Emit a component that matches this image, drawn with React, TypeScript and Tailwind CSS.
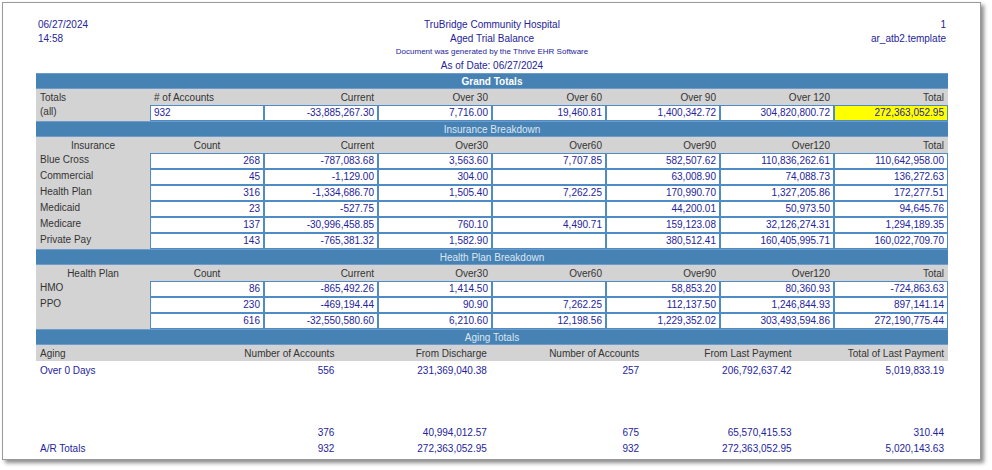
const blue = 'text-[#24249a]';

function Bar({ title, bold }: { title: string; bold?: boolean }) {
  return (
    <div className={`h-[16px] bg-[#4682b4] border-y border-[#6d9ccc] flex items-center justify-center text-[10px] ${bold ? 'font-bold text-white' : 'text-[#dde6f2]'}`}>
      {title}
    </div>
  );
}

function HeadRow({ cells, firstCenter }: { cells: string[]; firstCenter?: boolean }) {
  return (
    <div className="grid grid-cols-8 h-[16px] bg-[#d3d3d3] text-[10px] text-[#333] items-center">
      {cells.map((c, i) => (
        <div key={i} className={`px-1 ${i === 0 ? (firstCenter ? 'text-center' : 'text-left') : i === 1 && !firstCenter ? 'text-left' : i === 1 ? 'text-center' : 'text-right'}`}>
          {c}
        </div>
      ))}
    </div>
  );
}

function DataRow({ label, cells, hl, leftFirst }: { label: string; cells: string[]; hl?: boolean; leftFirst?: boolean }) {
  return (
    <div className="grid grid-cols-8 h-[16px] bg-[#d3d3d3] text-[10px]">
      <div className="px-1 text-[#333] leading-[14px]">{label}</div>
      {cells.map((c, i) => (
        <div
          key={i}
          className={`border border-[#4f8cc6] ${blue} px-[3px] leading-[14px] ${i === 0 && leftFirst ? 'text-left' : 'text-right'} ${hl && i === cells.length - 1 ? 'bg-[#ffff00]' : 'bg-white'}`}
        >
          {c}
        </div>
      ))}
    </div>
  );
}

const ins = [
  ['Blue Cross', '268', '-787,083.68', '3,563.60', '7,707.85', '582,507.62', '110,836,262.61', '110,642,958.00'],
  ['Commercial', '45', '-1,129.00', '304.00', '', '63,008.90', '74,088.73', '136,272.63'],
  ['Health Plan', '316', '-1,334,686.70', '1,505.40', '7,262.25', '170,990.70', '1,327,205.86', '172,277.51'],
  ['Medicaid', '23', '-527.75', '', '', '44,200.01', '50,973.50', '94,645.76'],
  ['Medicare', '137', '-30,996,458.85', '760.10', '4,490.71', '159,123.08', '32,126,274.31', '1,294,189.35'],
  ['Private Pay', '143', '-765,381.32', '1,582.90', '', '380,512.41', '160,405,995.71', '160,022,709.70'],
];

const hp = [
  ['HMO', '86', '-865,492.26', '1,414.50', '', '58,853.20', '80,360.93', '-724,863.63'],
  ['PPO', '230', '-469,194.44', '90.90', '7,262.25', '112,137.50', '1,246,844.93', '897,141.14'],
  ['', '616', '-32,550,580.60', '6,210.60', '12,198.56', '1,229,352.02', '303,493,594.86', '272,190,775.44'],
];

function AgingRow({ cells, cls }: { cells: string[]; cls: string }) {
  return (
    <div className={`grid grid-cols-[150px_repeat(5,1fr)] h-[16px] items-center text-[10px] ${cls}`}>
      {cells.map((c, i) => (
        <div key={i} className={`px-1 ${i === 0 ? 'text-left' : 'text-right'}`}>{c}</div>
      ))}
    </div>
  );
}

export default function App() {
  return (
    <div className="w-[992px] h-[470px] bg-white" style={{ fontFamily: '"Liberation Sans", Arial, sans-serif' }}>
      <div className="ml-[2px] mt-[2px] w-[979px] h-[458px] border border-[#9a9a9a] bg-white shadow-[3px_3px_4px_rgba(0,0,0,0.45)]">
        <div className="ml-[33px] w-[912px]">
          <div className={`grid grid-cols-3 ${blue} text-[10px] pt-[14px]`}>
            <div className="pl-[2px]">
              <div className="h-[14px]">06/27/2024</div>
              <div className="h-[14px]">14:58</div>
            </div>
            <div className="text-center">
              <div className="h-[14px]">TruBridge Community Hospital</div>
              <div className="h-[14px]">Aged Trial Balance</div>
              <div className="h-[13px] text-[8px] leading-[13px]">Document was generated by the Thrive EHR Software</div>
              <div className="h-[14px]">As of Date: 06/27/2024</div>
            </div>
            <div className="text-right pr-[2px]">
              <div className="h-[14px]">1</div>
              <div className="h-[14px]">ar_atb2.template</div>
            </div>
          </div>

          <div className="mt-[1px]">
            <Bar title="Grand Totals" bold />
            <HeadRow cells={['Totals', '# of Accounts', 'Current', 'Over 30', 'Over 60', 'Over 90', 'Over 120', 'Total']} />
            <DataRow label="(all)" leftFirst hl cells={['932', '-33,885,267.30', '7,716.00', '19,460.81', '1,400,342.72', '304,820,800.72', '272,363,052.95']} />
            <Bar title="Insurance Breakdown" />
            <HeadRow firstCenter cells={['Insurance', 'Count', 'Current', 'Over30', 'Over60', 'Over90', 'Over120', 'Total']} />
            {ins.map((r) => (
              <DataRow key={r[0]} label={r[0]} cells={r.slice(1)} />
            ))}
            <Bar title="Health Plan Breakdown" />
            <HeadRow firstCenter cells={['Health Plan', 'Count', 'Current', 'Over30', 'Over60', 'Over90', 'Over120', 'Total']} />
            {hp.map((r, i) => (
              <DataRow key={i} label={r[0]} cells={r.slice(1)} />
            ))}
            <Bar title="Aging Totals" />
            <AgingRow cls="bg-[#d3d3d3] text-[#333]" cells={['Aging', 'Number of Accounts', 'From Discharge', 'Number of Accounts', 'From Last Payment', 'Total of Last Payment']} />
            <div className="h-[1px]" />
            <AgingRow cls={blue} cells={['Over 0 Days', '556', '231,369,040.38', '257', '206,792,637.42', '5,019,833.19']} />
            <div className="h-[46px]" />
            <AgingRow cls={blue} cells={['', '376', '40,994,012.57', '675', '65,570,415.53', '310.44']} />
            <AgingRow cls={blue} cells={['A/R Totals', '932', '272,363,052.95', '932', '272,363,052.95', '5,020,143.63']} />
          </div>
        </div>
      </div>
    </div>
  );
}
